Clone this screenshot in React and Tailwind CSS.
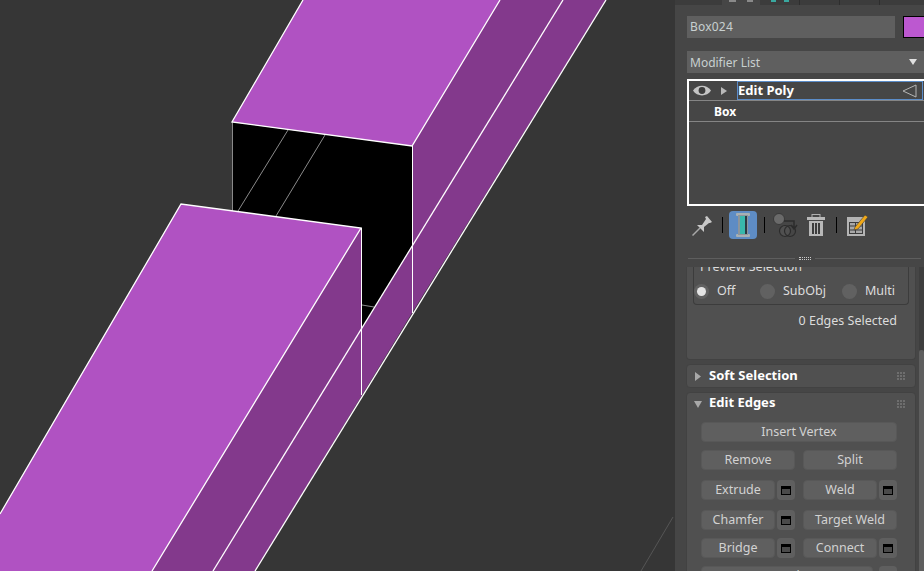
const font = { fontFamily: '"Noto Sans", sans-serif' }

function Viewport() {
  return (
    <div className="w-[675px] h-full shrink-0 bg-[#363636]">
      <svg width="675" height="571" viewBox="0 0 675 571" className="block">
        {/* black opening */}
        <polygon points="232,122 412,146 412,246 361,330 361,228 232,211" fill="#000" />
        {/* side faces */}
        <polygon points="412,146 500,0 606,0 412,313" fill="#83398c" />
        <polygon points="412,246 412,313 255,571 152,571 361,228 361,330" fill="#83398c" />
        {/* top faces */}
        <polygon points="232,122 303,0 500,0 412,146" fill="#b052c2" />
        <polygon points="181,204 361,228 152,571 0,571 0,514" fill="#b052c2" />
        {/* edges inside the hole */}
        <g stroke="#8a8a8a" strokeWidth="1" fill="none">
          <line x1="232.5" y1="122" x2="232.5" y2="211" />
          <line x1="288" y1="130" x2="238" y2="211" />
          <line x1="325" y1="135" x2="276" y2="216" />
          <line x1="362" y1="305" x2="374" y2="307" />
        </g>
        <g stroke="#fff" strokeWidth="1.3" fill="none">
          <polyline points="303,0 232,122 412,146 500,0" />
          <polyline points="0,514 181,204 361,228 152,571" />
          <line x1="563" y1="0" x2="213" y2="571" />
          <line x1="606" y1="0" x2="255" y2="571" />
        </g>
        <g stroke="#fff" strokeWidth="1" fill="none">
          <line x1="412.5" y1="146" x2="412.5" y2="313" />
          <line x1="361.5" y1="228" x2="361.5" y2="395" />
        </g>
        <line x1="673" y1="517" x2="641" y2="571" stroke="#555" />
      </svg>
    </div>
  )
}

function Grip() {
  return (
    <svg width="8" height="8" viewBox="0 0 8 8" className="shrink-0">
      {[0, 3, 6].map(y => [0, 3, 6].map(x => (
        <rect key={`${x}-${y}`} x={x} y={y} width="2" height="2" fill="#6e6e6e" />
      )))}
    </svg>
  )
}

function Btn({ children, className = '' }) {
  return (
    <div className={`h-5 rounded-[4px] bg-[#5f5f5f] flex items-center justify-center text-[12.5px] text-[#d2d2d2] border border-[#585858] ${className}`}>
      {children}
    </div>
  )
}

function SettingsBtn() {
  return (
    <div className="w-[18px] h-5 shrink-0 rounded-[4px] bg-[#5f5f5f] flex items-center justify-center">
      <div className="w-[10px] h-[9px] bg-[#4a4a4a] border border-black border-t-[3px]" />
    </div>
  )
}

function Radio({ label, on, className = '' }) {
  return (
    <div className={`flex items-center ${className}`}>
      <div className="w-[15px] h-[15px] rounded-full bg-[#616161] flex items-center justify-center">
        {on && <div className="w-[9px] h-[9px] rounded-full bg-[#e4e4e4]" />}
      </div>
      <span className="ml-[8px] text-[12.5px] text-[#dcdcdc]">{label}</span>
    </div>
  )
}

function Toolbar() {
  return (
    <div className="h-7 mt-[5px] shrink-0 flex items-center pl-[17px]">
      <svg width="20" height="20" viewBox="0 0 20 20" className="mt-[1px]">
        <path d="M0.5 19.5 L8 12" stroke="#a8a8a8" strokeWidth="1.5" />
        <path d="M5 9 L10 9 L14 3 L13 1 L15 0 L20 6 L18 7 L17 7 L12 11 L12 16 Z" fill="#c8c8c8" />
      </svg>
      <div className="w-px h-4 bg-black ml-[10px]" />
      <div className="w-7 h-7 ml-[6px] rounded-[4px] bg-[#5e8cc4] flex items-center justify-center">
        <svg width="14" height="24" viewBox="0 0 14 24">
          <rect x="0" y="0" width="14" height="3" rx="1" fill="#a8b0b4" />
          <rect x="0" y="21" width="14" height="3" rx="1" fill="#a8b0b4" />
          <rect x="2" y="2" width="10" height="20" fill="#8c959c" />
          <rect x="9" y="3" width="2" height="18" fill="#2c3a44" />
          <rect x="4" y="3" width="5" height="18" fill="#38b8ac" />
        </svg>
      </div>
      <div className="w-px h-4 bg-black ml-[7px]" />
      <svg width="25" height="25" viewBox="0 0 25 25" className="ml-[8px]">
        <circle cx="6" cy="6" r="5.5" fill="#6a6a6a" stroke="#3a3a3a" />
        <path d="M11 8 H21 V15 M18 12 L21 16 L24 12" fill="none" stroke="#2c2c2c" strokeWidth="1.5" />
        <circle cx="12" cy="18" r="5.5" fill="#505050" stroke="#2c2c2c" strokeWidth="1.2" />
        <circle cx="17" cy="18" r="5.5" fill="none" stroke="#2c2c2c" strokeWidth="1.2" />
      </svg>
      <svg width="18" height="22" viewBox="0 0 18 22" className="ml-[9px]">
        <rect x="5" y="0.5" width="8" height="3" fill="none" stroke="#b0b0b0" />
        <rect x="0" y="3" width="18" height="3" fill="#b8b8b8" />
        <path d="M2 7 H16 V22 H2 Z" fill="#b8b8b8" />
        <rect x="5" y="9" width="2" height="11" fill="#3c3c3c" />
        <rect x="8" y="9" width="2" height="11" fill="#3c3c3c" />
        <rect x="11" y="9" width="2" height="11" fill="#3c3c3c" />
      </svg>
      <div className="w-px h-4 bg-black ml-[11px]" />
      <svg width="22" height="22" viewBox="0 0 22 22" className="ml-[9px]">
        <rect x="1" y="3" width="18" height="19" fill="#b4b4b4" />
        <rect x="3" y="8" width="14" height="12" fill="#3c3c3c" />
        <g fill="#a8a8a8">
          <rect x="4" y="9" width="5" height="2.5" />
          <rect x="10" y="9" width="6" height="2.5" />
          <rect x="4" y="12.5" width="5" height="3" />
          <rect x="10" y="12.5" width="6" height="3" />
          <rect x="4" y="16.5" width="5" height="2.5" />
          <rect x="10" y="16.5" width="6" height="2.5" />
        </g>
        <path d="M9 13 L19 1 L22 3 L12 15 L8 16 Z" fill="#f0a818" stroke="#3a3a3a" strokeWidth="0.6" />
      </svg>
    </div>
  )
}

function Rollout({ title, open, className = '', children }) {
  return (
    <div className={`rounded-[4px] bg-[#505050] border border-[#424242] ${className}`}>
      <div className="h-[22px] flex items-center pl-[7px] pr-[10px]">
        <svg width="8" height="9" viewBox="0 0 8 9" className="shrink-0">
          <path d={open ? 'M0 1 H8 L4 8 Z' : 'M1 0 L7 4.5 L1 9 Z'} fill="#a8a8a8" />
        </svg>
        <span className={`ml-[7px] flex-1 text-[13px] font-bold text-white ${open ? 'mb-[2px]' : ''}`}>{title}</span>
        <Grip />
      </div>
      {children}
    </div>
  )
}

function CommandPanel() {
  return (
    <div className="flex-1 h-full overflow-hidden bg-[#464646] flex flex-col" style={font}>
      {/* tab strip */}
      <div className="h-[5px] shrink-0 bg-[#3c3c3c] flex">
        <div className="w-[47px]" />
        <div className="w-[38px] bg-[#464646] flex justify-center gap-[11px] items-start">
          <div className="w-[7px] h-[2px] bg-[#8a8a8a]" />
          <div className="w-[6px] h-[2px] bg-[#8a8a8a]" />
        </div>
        <div className="w-[40px] border-r border-[#2e2e2e] flex justify-center gap-[8px]">
          <div className="w-[5px] h-[2px] bg-[#3aa8a0]" />
          <div className="w-[5px] h-[2px] bg-[#3aa8a0]" />
        </div>
        <div className="w-[40px] border-r border-[#2e2e2e]" />
        <div className="w-[40px] border-r border-[#2e2e2e]" />
        <div className="w-[44px]" />
      </div>

      <div className="pl-[12px] mt-[11px] flex h-[22px] shrink-0">
        <div className="w-[208px] bg-[#5f5f5f] flex items-center px-[3px] text-[12px] text-[#c8d0d0] tracking-[0.2px]">Box024</div>
        <div className="ml-[8px] flex-1 bg-[#bc58d0] border-l border-t border-b border-black" />
      </div>

      <div className="ml-[12px] mt-[13px] h-[22px] shrink-0 bg-[#5f5f5f] flex items-center px-[3px] text-[12px] text-[#c8d0d0]">
        <span className="flex-1 pt-[1px]">Modifier List</span>
        <svg width="8" height="6" viewBox="0 0 8 6" className="mr-[4px]"><path d="M0 0 H8 L4 6 Z" fill="#e0e0e0" /></svg>
      </div>

      {/* modifier stack */}
      <div className="ml-[12px] mt-[6px] h-[127px] shrink-0 border-2 border-white border-r-0 bg-[#464646] flex flex-col">
        <div className="h-[20px] shrink-0 flex items-center border-b border-[#858585]">
          <svg width="18" height="11" viewBox="0 0 18 11" className="ml-[4px] shrink-0">
            <path d="M0 5.5 C4 -1 14 -1 18 5.5 C14 12 4 12 0 5.5 Z" fill="#c4c4c4" />
            <circle cx="9" cy="5.5" r="3.4" fill="#3c3c3c" />
          </svg>
          <svg width="6" height="8" viewBox="0 0 6 8" className="ml-[10px] shrink-0"><path d="M0 0 L6 4 L0 8 Z" fill="#b8b8b8" /></svg>
          <div className="ml-[10px] flex-1 h-[19px] border border-[#5b8cc8] flex items-center justify-between pr-[5px] mr-[1px]">
            <span className="text-[13px] font-bold text-white leading-none">Edit Poly</span>
            <svg width="15" height="14" viewBox="0 0 15 14"><path d="M1 7 L14 1 V13 Z" fill="none" stroke="#b4b4b4" /></svg>
          </div>
        </div>
        <div className="h-[21px] shrink-0 flex items-center border-b border-[#858585] pl-[25px] pt-[1px]">
          <span className="text-[12px] font-bold text-white leading-none">Box</span>
        </div>
      </div>

      <Toolbar />

      {/* divider */}
      <div className="mt-[15px] h-[8px] shrink-0 flex items-center pl-[13px] pr-[3px]">
        <div className="flex-1 h-px bg-[#5e5e5e]" />
        <div className="mx-[4px] w-[12px] h-[3px] border-y border-dotted border-[#c8c8c8]" />
        <div className="flex-1 h-px bg-[#5e5e5e]" />
      </div>

      {/* scrolling rollouts */}
      <div className="flex-1 min-h-0 mt-[5px] flex overflow-hidden">
        <div className="w-[230px] ml-[11px] shrink-0 flex flex-col">
          <div className="h-[93px] shrink-0 rounded-b-[4px] bg-[#505050] border border-t-0 border-[#424242] px-[6px] relative overflow-hidden">
            <div className="h-[38px] rounded-b-[4px] border border-t-0 border-[#3c3c3c] flex items-center pt-[12px]">
              <Radio label="Off" on className="w-[66px]" />
              <Radio label="SubObj" className="w-[82px]" />
              <Radio label="Multi" />
            </div>
            <span className="absolute top-[-6px] left-[13px] text-[12.5px] text-[#dcdcdc] leading-none">Preview Selection</span>
            <div className="mt-[7px] pr-[12px] text-right text-[12.5px] text-[#dcdcdc]">0 Edges Selected</div>
          </div>
          <Rollout title="Soft Selection" className="mt-[4px] shrink-0" />
          <Rollout title="Edit Edges" open className="mt-[4px] shrink-0 h-[200px]">
            <div className="pl-[14px] pr-[18px] pt-[7px] flex flex-col">
              <Btn>Insert Vertex</Btn>
              <div className="mt-[8px] grid grid-cols-2 gap-[8px]">
                <Btn>Remove</Btn>
                <Btn>Split</Btn>
              </div>
              <div className="mt-[10px] grid grid-cols-2 gap-[8px]">
                <div className="flex gap-[2px]"><Btn className="flex-1">Extrude</Btn><SettingsBtn /></div>
                <div className="flex gap-[2px]"><Btn className="flex-1">Weld</Btn><SettingsBtn /></div>
              </div>
              <div className="mt-[10px] grid grid-cols-2 gap-[8px]">
                <div className="flex gap-[2px]"><Btn className="flex-1">Chamfer</Btn><SettingsBtn /></div>
                <Btn>Target Weld</Btn>
              </div>
              <div className="mt-[8px] grid grid-cols-2 gap-[8px]">
                <div className="flex gap-[2px]"><Btn className="flex-1">Bridge</Btn><SettingsBtn /></div>
                <div className="flex gap-[2px]"><Btn className="flex-1">Connect</Btn><SettingsBtn /></div>
              </div>
              <div className="mt-[8px] flex justify-between">
                <Btn className="w-[172px]">Create Shape</Btn>
                <SettingsBtn />
              </div>
            </div>
          </Rollout>
        </div>
        <div className="ml-[3px] w-[6px] flex flex-col">
          <div className="h-[83px] bg-[#3e3e3e]" />
          <div className="flex-1 bg-[#5e5e5e] rounded-t-[3px]" />
        </div>
      </div>
    </div>
  )
}

export default function App() {
  return (
    <div className="w-[924px] h-[571px] flex overflow-hidden bg-[#363636]">
      <Viewport />
      <CommandPanel />
    </div>
  )
}
